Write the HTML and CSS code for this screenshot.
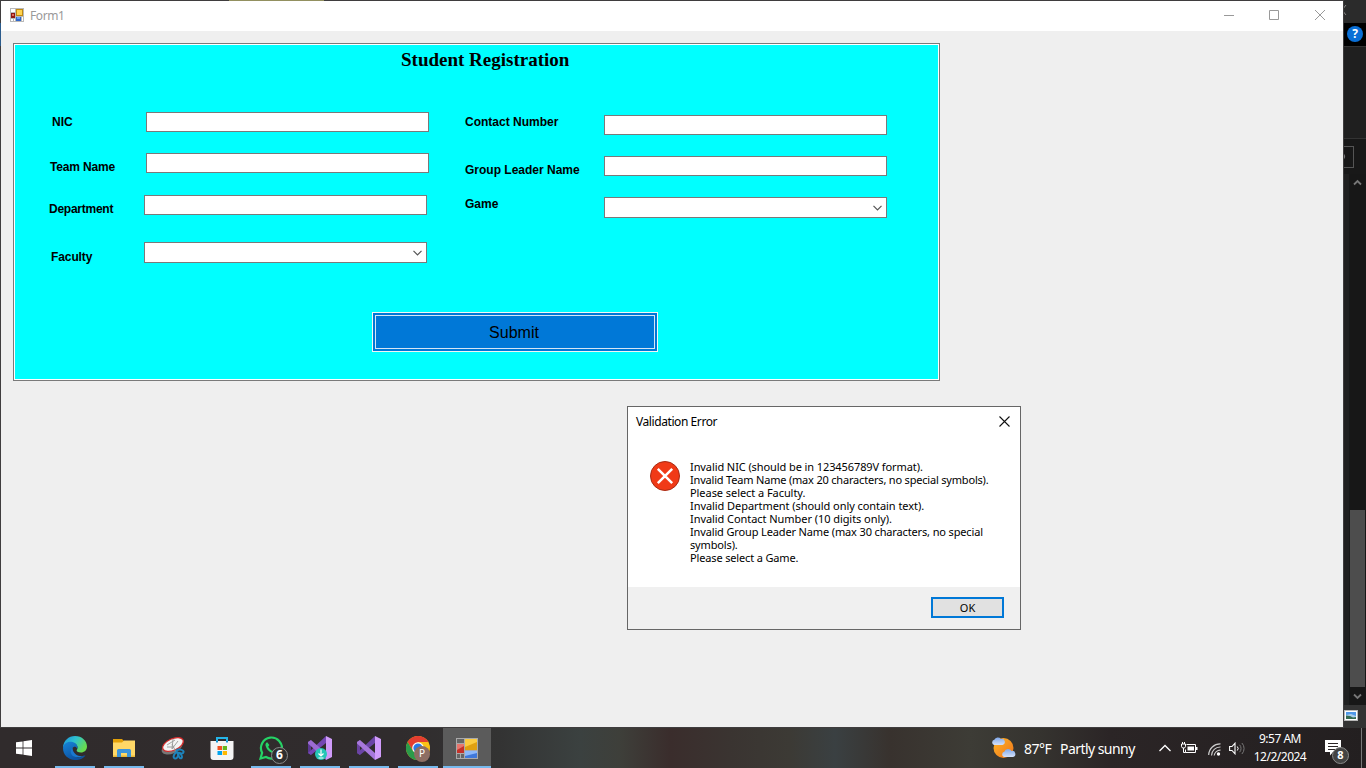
FILE: index.html
```html
<!DOCTYPE html>
<html lang="en">
<head>
<meta charset="utf-8">
<title>Form1</title>
<link rel="stylesheet" href="styles.css">
</head>
<body>
<div class="desktop">
  <div class="workspace">
    <section class="window">
      <header class="titlebar">
        <svg class="app-icon" width="14" height="14" viewBox="0 0 14 14">
          <rect width="14" height="14" fill="#b9b9b9"/><path d="M1 1h4v3H1zM1 11h2v2H1zM4 11h1v2H4zM12 9h1v4h-1z" fill="#fff"/>
          <rect x="6" y="1" width="7" height="7" fill="#c08a10"/><rect x="7" y="2" width="5" height="5" fill="#ffd34f"/>
          <rect x="1" y="5" width="4" height="5" fill="#8f1712"/><rect x="2" y="6" width="2" height="2" fill="#e06a5c"/>
          <rect x="6" y="9" width="5" height="4" fill="#2f67cc"/><rect x="7" y="9" width="3" height="2" fill="#6ba2f2"/>
        </svg>
        <span class="window-title">Form1</span>
        <div class="caption-buttons">
          <svg width="10" height="10" viewBox="0 0 10 10"><path d="M0 5.5h10"/></svg>
          <svg width="10" height="10" viewBox="0 0 10 10"><path d="M.5.5h9v9h-9z"/></svg>
          <svg width="10" height="10" viewBox="0 0 10 10"><path d="M0 0l10 10M10 0L0 10"/></svg>
        </div>
      </header>
      <main class="client">
        <form class="panel">
          <h1 class="panel-title">Student Registration</h1>
          <div class="columns">
            <div class="column column-left">
              <div class="row row-nic"><label>NIC</label><span class="field"></span></div>
              <div class="row row-team"><label>Team Name</label><span class="field"></span></div>
              <div class="row row-department"><label>Department</label><span class="field"></span></div>
              <div class="row row-faculty"><label>Faculty</label><span class="field select"><svg width="9" height="6" viewBox="0 0 9 6"><path d="M.5.8l4 4 4-4"/></svg></span></div>
            </div>
            <div class="column column-right">
              <div class="row row-contact"><label>Contact Number</label><span class="field"></span></div>
              <div class="row row-leader"><label>Group Leader Name</label><span class="field"></span></div>
              <div class="row row-game"><label>Game</label><span class="field select"><svg width="9" height="6" viewBox="0 0 9 6"><path d="M.5.8l4 4 4-4"/></svg></span></div>
            </div>
          </div>
          <div class="submit"><span class="submit-face">Submit</span></div>
        </form>
      </main>
      <i class="edge-olive"></i><i class="edge-blue"></i>
    </section>

    <aside class="backdrop">
      <div class="bd-top"><svg width="4" height="10" viewBox="0 0 4 10"><path d="M2 0L-2 5l4 5" stroke="#888" fill="none"/></svg></div>
      <div class="bd-help"><span class="help">?</span></div>
      <div class="bd-ribbon"></div>
      <div class="bd-search"><span class="search-box"><svg width="3" height="8" viewBox="0 0 3 8"><path d="M0 1a2.500 3 0 0 1 0 5" fill="#777"/></svg></span></div>
      <div class="bd-scroll">
        <svg width="9" height="7" viewBox="0 0 9 7"><path d="M1 5.500L4.500 2 8 5.500"/></svg>
        <span class="thumb"></span>
        <svg width="9" height="7" viewBox="0 0 9 7"><path d="M1 1.500L4.500 5 8 1.500"/></svg>
      </div>
      <div class="bd-foot"><svg width="14" height="11" viewBox="0 0 14 11"><rect width="14" height="11" fill="#b8b8b8"/><rect x="1" y="1" width="12" height="9" fill="#fff"/><rect x="2" y="2" width="10" height="7" fill="#4f97e8"/><path d="M2 5l5-1 5 2v3H2z" fill="#a9cdea"/><path d="M2 5.500l4 .5 3 1.500 3-.5v2H2z" fill="#356b52"/></svg></div>
    </aside>
  </div>

  <div class="dialog">
    <div class="dialog-bar"><span class="dialog-title">Validation Error</span>
      <svg width="11" height="11" viewBox="0 0 11 11"><path d="M.5.5l10 10M10.500.5l-10 10"/></svg></div>
    <div class="dialog-body">
      <svg class="error-icon" width="30" height="30" viewBox="0 0 30 30"><circle cx="15" cy="15" r="14.500" fill="#f03a17" stroke="#a82b14"/><path d="M7.800 7.800l14.400 14.400M22.200 7.800L7.800 22.200" stroke="#fff" stroke-width="2.500"/></svg>
      <div class="message">
        <p class="m1">Invalid NIC (should be in 123456789V format).</p>
        <p class="m2">Invalid Team Name (max 20 characters, no special symbols).</p>
        <p class="m3">Please select a Faculty.</p>
        <p class="m4">Invalid Department (should only contain text).</p>
        <p class="m5">Invalid Contact Number (10 digits only).</p>
        <p class="m6">Invalid Group Leader Name (max 30 characters, no special</p>
        <p class="m7">symbols).</p>
        <p class="m8">Please select a Game.</p>
      </div>
    </div>
    <div class="dialog-foot"><span class="ok">OK</span></div>
  </div>

  <footer class="taskbar">
    <div class="start"><svg width="16" height="16" viewBox="0 0 16 16"><path d="M0 2.300l6.600-.9v6.200H0zM7.400 1.300L16 0v7.600H7.400zM0 8.400h6.600v6.200L0 13.700zM7.400 8.400H16V16l-8.600-1.200z" fill="#fff"/></svg></div>
    <div class="apps">
      <div class="app running"><svg width="24" height="24" viewBox="0 0 24 24">
        <defs>
          <linearGradient id="eg" x1="0" y1="0" x2="1" y2=".5"><stop offset="0" stop-color="#1b8fdd"/><stop offset=".5" stop-color="#2fc2cf"/><stop offset="1" stop-color="#67dc4f"/></linearGradient>
          <linearGradient id="eb" x1="0" y1="0" x2=".5" y2="1"><stop offset="0" stop-color="#1784d8"/><stop offset="1" stop-color="#0c51a0"/></linearGradient>
        </defs>
        <path d="M0 11.500C.5 4.500 5.600 0 12 0c7 0 12 5 12 10.500 0 3.800-2.800 6-6 6-3 0-4.800-1.200-4.300-2.200 2.200-3.300-.1-7-4.200-7.300C5 6.700 1.500 8.700 0 11.500z" fill="url(#eg)"/>
        <path d="M0 12c.5-4.300 4-6.600 8.300-6.200 4.500.4 7 4 6 7.200-.7-2-2-2.500-3.200-2.300C6.500 13 8.500 20 13.500 21.200c3 .7 6-.2 8-1.700.6-.3.9.2.6.6C19.800 23 16 24.300 12 24 5 23.800 0 18.600 0 12z" fill="url(#eb)"/>
        <path d="M9.500 11.500C6 14.800 8 21 13.500 21.200c3 .3 6-.2 8-1.700-1.800.9-4 1-6 .3-3.700-1.300-6-4.600-6-8.300z" fill="#1a78cf"/>
      </svg></div>
      <div class="app running"><svg width="22" height="19" viewBox="0 0 22 19"><path d="M0 0h9l2 2h11v16H0z" fill="#e3a008"/><path d="M0 3.500h9L11 1.500h11V18H0z" fill="#ffd867"/><path d="M0 16.500h22V18H0z" fill="#e9b93b"/><path d="M4 18v-6.500A1.500 1.500 0 0 1 5.500 10h11a1.500 1.500 0 0 1 1.500 1.500V18h-4v-4H8v4z" fill="#3d95db"/></svg></div>
      <div class="app"><svg width="24" height="24" viewBox="0 0 24 24"><ellipse cx="11" cy="11.500" rx="11" ry="6" transform="rotate(-24 11 11.500)" fill="#777"/><ellipse cx="12" cy="8.500" rx="11" ry="5.800" transform="rotate(-24 12 8.500)" fill="#f4f4f4" stroke="#d42b2b" stroke-width="1.200"/><path d="M6 9l8-5M12 3l-1 10M6 11h7M11 8l4 8M17 5l-6 8" stroke="#999" stroke-width=".9"/><g fill="none" stroke="#1d83bb" stroke-width="2"><ellipse cx="19" cy="15.500" rx="3.600" ry="1.900" transform="rotate(10 19 15.500)"/><ellipse cx="15" cy="19.500" rx="2" ry="3.200" transform="rotate(25 15 19.500)"/><ellipse cx="19" cy="19.500" rx="1.500" ry="3" transform="rotate(-25 19 19.500)"/></g></svg></div>
      <div class="app"><svg width="24" height="24" viewBox="0 0 24 24"><path d="M7 6V2h10v4" fill="none" stroke="#25b5e8" stroke-width="2"/><path d="M.5 5h23v16a3 3 0 0 1-3 3h-17a3 3 0 0 1-3-3z" fill="#f4f4f4"/><path d="M6 5h2v1.500H6zM16 5h2v1.500h-2z" fill="#1396d6"/><path d="M7.500 10H12v4H7.500z" fill="#f25022"/><path d="M12.700 10h4.300v4h-4.300z" fill="#65b81c"/><path d="M7.500 15H12v4H7.500z" fill="#00a4ef"/><path d="M12.700 15h4.300v4h-4.300z" fill="#ffb900"/></svg></div>
      <div class="app running"><svg width="24" height="24" viewBox="0 0 24 24"><path d="M1.500 22.500l1.600-5.700A10.500 10.500 0 1 1 7 21z" fill="none" stroke="#25d366" stroke-width="2.200"/><path d="M8.200 6.200c-1.500.5-2 2-1.600 3.600C7.500 13.500 11 17 15 17.500c1.600.1 3-.8 3.100-2.600l-3-1.600-1.500 1.600c-2-.8-3.500-2.200-4.400-4.100L10.400 9z" fill="#25d366"/></svg><span class="badge badge-chat">6</span></div>
      <div class="app running"><svg width="24" height="24" viewBox="0 0 24 24"><path d="M0 6l3-2v15l-3-2z" fill="#5b3792"/><path d="M0 17L18 0v7L3 19z" fill="#7346b4"/><path d="M3 4l15 13v7L0 7.500V6z" fill="#9b6bd3"/><path d="M18 0l6 3v18l-6 3z" fill="#cf9bfa"/></svg><span class="badge-update"><svg width="12" height="12" viewBox="0 0 12 12"><path d="M6 1.500v6M3.500 5.500L6 8l2.500-2.500M3.500 10h5" fill="none" stroke="#fff" stroke-width="1.200"/></svg></span></div>
      <div class="app running"><svg width="24" height="24" viewBox="0 0 24 24"><path d="M0 6l3-2v15l-3-2z" fill="#69419f"/><path d="M0 17L18 0v7L3 19z" fill="#6b45a6"/><path d="M3 4l15 13v7L0 7.500V6z" fill="#a778dc"/><path d="M18 0l6 3v18l-6 3z" fill="#d19cfb"/></svg></div>
      <div class="app running"><svg width="24" height="24" viewBox="0 0 24 24"><circle cx="12" cy="12" r="12" fill="#fbc116"/><path d="M1.600 6A12 12 0 0 1 22.400 6H12l-5 9z" fill="#e43d30"/><path d="M1.600 6A12 12 0 0 0 12 24l5.200-9-5.200 2-5-2z" fill="#2b9b4a"/><circle cx="12" cy="12" r="5.800" fill="#fff"/><circle cx="12" cy="12" r="4.600" fill="#2979e8"/></svg><span class="badge-profile">P</span></div>
      <div class="app active"><svg width="22" height="21" viewBox="0 0 22 21"><rect width="22" height="21" fill="#aaa"/><path d="M1 1h7v4H1zM1 16h3v4H1zM5 16h3v4H5z" fill="#666"/><rect x="9" y="1" width="12" height="11" fill="#e0a010"/><path d="M9 1h12v3L9 9z" fill="#fbcb40"/><rect x="1" y="6" width="7" height="9" fill="#c53129"/><path d="M1 6h7v2l-7 4z" fill="#e8756c"/><rect x="9" y="13" width="12" height="7" fill="#3f78da"/><path d="M9 13h12v2L9 18z" fill="#8cb8fa"/></svg></div>
    </div>
    <div class="tray">
      <svg class="weather-icon" width="25" height="23" viewBox="0 0 25 23"><defs><linearGradient id="sun" x1="0" y1="0" x2="1" y2="1"><stop offset="0" stop-color="#fdb62b"/><stop offset="1" stop-color="#f07318"/></linearGradient><linearGradient id="cl" x1="0" y1="0" x2="0" y2="1"><stop offset="0" stop-color="#7fa8ea"/><stop offset="1" stop-color="#d6e2fa"/></linearGradient></defs><circle cx="12.500" cy="12" r="10" fill="url(#sun)"/><path d="M3 9a2.700 2.700 0 0 1 .3-5.200A4 4 0 0 1 10 3a3 3 0 0 1 1.500 6z" fill="url(#cl)"/><path d="M13 21a2.700 2.700 0 0 1 .3-5.200 4 4 0 0 1 7.200-.8A3 3 0 0 1 22 21z" fill="url(#cl)"/></svg>
      <span class="temperature">87°F</span>
      <span class="conditions">Partly sunny</span>
      <svg class="chevron" width="12" height="8" viewBox="0 0 12 8"><path d="M.5 7L6 1.500 11.500 7" fill="none" stroke="#fff" stroke-width="1.300"/></svg>
      <svg class="battery" width="17" height="12" viewBox="0 0 17 12"><path d="M5.500 2.500h9v8h-10V7.500" fill="none" stroke="#fff"/><path d="M6.500 4.500h6.500v4H6.500zM15 5h1.500v3H15z" fill="#fff"/><path d="M1.500 0v2M3.500 0v2M2.500 6v4.500h2" fill="none" stroke="#fff"/><path d="M.5 2h4v2.500L3.500 6h-2l-1-1.500z" fill="#2b2526" stroke="#fff"/></svg>
      <svg class="wifi" width="13" height="13" viewBox="0 0 13 13"><g fill="none" stroke="#ccc" stroke-width="1.200"><path d="M.7 12A11.500 11.500 0 0 1 12.500.8M3.500 12.500A8.700 8.700 0 0 1 12.500 4M6.200 12.500a6 6 0 0 1 6.300-5.300"/></g><circle cx="10.500" cy="11" r="1.700" fill="#fff"/></svg>
      <svg class="volume" width="16" height="13" viewBox="0 0 16 13"><path d="M.6 4.500H3L6 1.200v10.600L3 8.500H.6z" fill="none" stroke="#fff" stroke-width="1.100"/><path d="M8.300 4.500a3 3 0 0 1 0 4" fill="none" stroke="#fff"/><path d="M10.600 2.800a5.500 5.500 0 0 1 0 7.400M12.900 1a8 8 0 0 1 0 11" fill="none" stroke="#777"/></svg>
      <div class="clock"><span>9:57 AM</span><span class="date">12/2/2024</span></div>
      <div class="notifications"><svg width="16" height="16" viewBox="0 0 16 16"><path d="M0 0h16v12H8l-3 3.500V12H0z" fill="#fff"/><path d="M3 3.500h10M3 6.500h10M3 9.500h7" stroke="#2b2526"/></svg><span class="badge badge-notify">8</span></div>
    </div>
  </footer>
</div>
</body>
</html>
```

FILE: styles.css
```css
* { box-sizing: border-box; }
body { margin: 0; font-family: "Noto Sans", sans-serif; }
svg { display: block; flex: none; }

.desktop { position: relative; width: 1366px; height: 768px; display: flex; flex-direction: column; overflow: hidden; }
.workspace { display: flex; height: 728px; }

.window { position: relative; width: 1344px; display: flex; flex-direction: column; border: 1px solid #3f3d3e; background: #f0f0f0; }
.edge-olive { position: absolute; top: -1px; left: 228px; width: 95px; height: 1px; background: #929060; }
.edge-blue { position: absolute; top: 22px; left: -1px; width: 1px; height: 23px; background: #2b5b8c; }
.titlebar { height: 30px; display: flex; align-items: center; padding: 0 18px 0 9px; background: #fff; }
.app-icon { margin-bottom: 2px; }
.window-title { margin-left: 6px; font-size: 12px; line-height: 16px; color: #999; letter-spacing: -.4px; }
.caption-buttons { margin: 0 0 2px auto; display: flex; gap: 36px; }
.caption-buttons svg { stroke: #999; fill: none; }
.caption-buttons svg:nth-child(2) { margin-left: -1px; }

.client { flex: 1; padding: 12px; background: #efefef; }
.panel { width: 927px; height: 338px; border: 1px solid #7a7a7a; background: #0ff; box-shadow: inset 0 0 0 1px #fff; }
.panel-title { margin: 0; padding: 5px 0 0 387px; height: 68px; font: bold 19px/22px "Liberation Serif", serif; white-space: nowrap; }
.columns { display: flex; padding-left: 35px; height: 200px; }
.column-left { width: 416px; }
.column-right { padding-top: 3px; }
.row { display: flex; align-items: flex-start; }
.row label { font: bold 12px/14px "Liberation Sans", sans-serif; white-space: nowrap; color: #000; }
.column-left label { width: 97px; }
.column-right label { width: 139px; }
.field { width: 283px; height: 20px; border: 1px solid #7a7a7a; background: #fff; }
.select { height: 21px; display: flex; align-items: center; justify-content: flex-end; padding-right: 4px; }
.select svg { fill: none; stroke: #555; stroke-width: 1.2; }
.row-nic { height: 41px; }
.row-nic label { padding: 3px 0 0 3px; }
.row-team { height: 42px; }
.row-team label { padding: 7px 0 0 1px; letter-spacing: -.15px; }
.row-department { height: 47px; }
.column-left .row-department label { width: 95px; padding-top: 7px; letter-spacing: -.25px; }
.column-left .row-faculty label { width: 95px; padding: 8px 0 0 2px; letter-spacing: -.1px; }
.row-contact, .row-leader { height: 41px; }
.row-leader label { padding-top: 7px; }
.submit { width: 286px; height: 40px; margin-left: 358px; border: 1px solid #f4f4f4; padding: 2px; background: #0078d7; }
.submit-face { display: flex; height: 100%; align-items: center; justify-content: center; padding: 2px 2px 0 0; border: 1px solid #d5e6f5; font: 16px "Liberation Sans", sans-serif; color: #000; }

.backdrop { width: 22px; display: flex; flex-direction: column; overflow: hidden; background: #1f1f1f; }
.bd-top { height: 23px; padding-top: 5px; background: #2b2b2b; }
.bd-help { height: 23px; padding: 3px 0 0 3px; background: #000; }
.help { display: block; width: 16px; height: 16px; border-radius: 50%; background: #0a6fd6; color: #fff; font: bold 12px/16px "Noto Sans", sans-serif; text-align: center; }
.bd-ribbon { height: 92px; border-top: 1px solid #333; }
.bd-search { height: 36px; padding-top: 7px; border-top: 1px solid #333; background: #181818; }
.search-box { display: block; width: 10px; height: 22px; padding-top: 6px; border: 1px solid #555; border-left: 0; }
.bd-scroll { height: 531px; margin-left: 5px; padding: 5px 0 5px; display: flex; flex-direction: column; align-items: center; background: #171717; }
.bd-scroll svg { fill: none; stroke: #777; stroke-width: 1.8; }
.thumb { width: 15px; height: 177px; margin: auto 0 6px; background: #4d4d4d; }
.bd-foot { flex: 1; padding-top: 5px; background: #333; }

.dialog { position: absolute; left: 627px; top: 406px; width: 394px; height: 224px; display: flex; flex-direction: column; border: 1px solid #666; background: #fff; color: #000; }
.dialog-bar { height: 30px; padding: 0 10px 0 8px; display: flex; align-items: center; justify-content: space-between; }
.dialog-bar svg { stroke: #111; stroke-width: 1.1; margin-bottom: 2px; }
.dialog-title { font-size: 12px; line-height: 16px; letter-spacing: -.42px; }
.dialog-body { flex: 1; display: flex; gap: 10px; padding: 24px 0 0 22px; }
.message { margin-top: -1px; font-size: 11px; line-height: 13px; white-space: nowrap; }
.message p { margin: 0; }
.m1 { letter-spacing: -.09px; }
.m2 { letter-spacing: -.19px; }
.m3, .m4, .m5 { letter-spacing: -.06px; }
.m6 { letter-spacing: -.14px; }
.m7, .m8 { letter-spacing: -.15px; }
.dialog-foot { height: 42px; padding: 10px 16px; display: flex; justify-content: flex-end; background: #f0f0f0; }
.ok { width: 73px; height: 21px; border: 2px solid #0078d7; background: #e1e1e1; font-size: 11px; line-height: 18px; text-align: center; }

.taskbar { height: 40px; display: flex; color: #fff; background: linear-gradient(90deg, #302b2c 0, #302c2d 400px, #333 500px, #3b4140 580px, #3e3f3a 620px, #3a2d2c 670px, #3a3431 730px, #3c3a35 790px, #3a4042 835px, #38322e 890px, #3d3c36 970px, #35332f 1040px, #2b2526 1110px, #231f20 1366px); }
.start { width: 51px; padding: 12px 0 0 16px; }
.apps { display: flex; gap: 1px; }
.app { position: relative; width: 48px; display: flex; align-items: center; justify-content: center; }
.running::after, .active::after { content: ""; position: absolute; bottom: 0; left: 4px; right: 4px; height: 2px; background: #76b9ed; }
.active { background: #5b5b5b; }
.active::after { left: 0; right: 0; }
.badge { position: absolute; width: 17px; height: 17px; border: 1px solid #8a8a8a; border-radius: 50%; background: #303030; font-size: 11px; font-weight: 700; line-height: 15px; text-align: center; }
.badge-chat { left: 24px; top: 19px; font-size: 12px; line-height: 14px; }
.badge-update { position: absolute; left: 19px; top: 20px; width: 12px; height: 12px; border-radius: 50%; background: #25c6b6; }
.badge-profile { position: absolute; left: 20px; top: 18px; width: 16px; height: 16px; border-radius: 50%; background: #8d6e63; font-size: 10px; line-height: 15px; text-align: center; }
.tray { margin-left: auto; width: 375px; display: flex; align-items: center; font-size: 14px; white-space: nowrap; }
.weather-icon { margin-bottom: 1px; }
.temperature { width: 36px; margin-left: 8px; letter-spacing: -.5px; }
.conditions { width: 99px; letter-spacing: -.55px; }
.battery { margin-left: 10px; }
.wifi { margin-left: 10px; margin-top: 2px; }
.volume { margin-left: 8px; }
.clock { width: 72px; display: flex; flex-direction: column; align-items: center; font-size: 12px; line-height: 18px; letter-spacing: -.5px; margin-left: -1px; }
.notifications { position: relative; width: 37px; height: 40px; margin-left: 9px; padding-top: 12px; border-right: 1px solid #777; }
.badge-notify { left: 7px; top: 19px; background: #444; line-height: 14px; }
```
